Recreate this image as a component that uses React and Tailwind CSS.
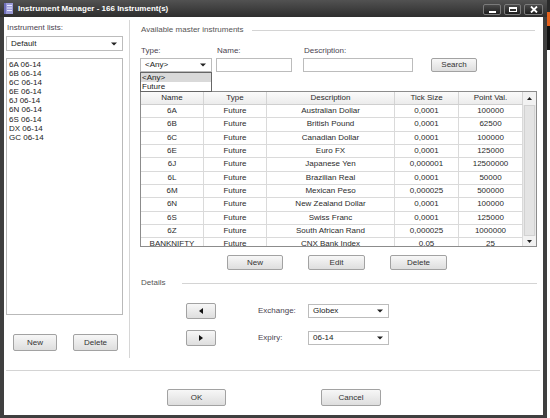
import React from 'react';

const instruments = [
  { name: '6A', type: 'Future', desc: 'Australian Dollar', tick: '0,0001', point: '100000' },
  { name: '6B', type: 'Future', desc: 'British Pound', tick: '0,0001', point: '62500' },
  { name: '6C', type: 'Future', desc: 'Canadian Dollar', tick: '0,0001', point: '100000' },
  { name: '6E', type: 'Future', desc: 'Euro FX', tick: '0,0001', point: '125000' },
  { name: '6J', type: 'Future', desc: 'Japanese Yen', tick: '0,000001', point: '12500000' },
  { name: '6L', type: 'Future', desc: 'Brazilian Real', tick: '0,0001', point: '50000' },
  { name: '6M', type: 'Future', desc: 'Mexican Peso', tick: '0,000025', point: '500000' },
  { name: '6N', type: 'Future', desc: 'New Zealand Dollar', tick: '0,0001', point: '100000' },
  { name: '6S', type: 'Future', desc: 'Swiss Franc', tick: '0,0001', point: '125000' },
  { name: '6Z', type: 'Future', desc: 'South African Rand', tick: '0,000025', point: '1000000' },
  { name: 'BANKNIFTY', type: 'Future', desc: 'CNX Bank Index', tick: '0,05', point: '25' },
];

const lists = ['6A 06-14', '6B 06-14', '6C 06-14', '6E 06-14', '6J 06-14', '6N 06-14', '6S 06-14', 'DX 06-14', 'GC 06-14'];

const columns = [
  { key: 'name', label: 'Name', w: 'w-[63px]' },
  { key: 'type', label: 'Type', w: 'w-[63px]' },
  { key: 'desc', label: 'Description', w: 'w-[128px]' },
  { key: 'tick', label: 'Tick Size', w: 'w-[64px]' },
  { key: 'point', label: 'Point Val.', w: 'w-[64px]' },
];

const Caret = () => (
  <svg width="6" height="4" viewBox="0 0 6 4">
    <path d="M0 0.5h6L3 3.5z" fill="#222" />
  </svg>
);

const Combo = ({ value, className }) => (
  <div className={`flex items-center justify-between border border-[#bcbcbc] bg-white pl-[4px] pr-[5px] text-[#222] ${className}`}>
    <span>{value}</span>
    <Caret />
  </div>
);

const Btn = ({ children, className }) => (
  <button className={`flex items-center justify-center rounded-[2px] border border-[#a2a2a2] bg-linear-to-b from-[#f7f7f7] to-[#dedede] text-[#333] ${className}`}>
    {children}
  </button>
);

const WinBtn = ({ children, className }) => (
  <div className={`flex h-[11px] items-center justify-center rounded-[2px] border border-[#7a7a7a] bg-linear-to-b from-[#4a4a4a] to-[#1e1e1e] ${className}`}>
    {children}
  </div>
);

const App = () => {
  return (
    <div className="flex h-[418px] w-[550px] overflow-hidden bg-white font-['Liberation_Sans',Arial,sans-serif]">
      {/* window */}
      <div className="flex h-full w-[547px] flex-col bg-[#3f3f3f]">
        {/* title bar */}
        <div className="flex h-[17px] items-start bg-linear-to-b from-[#525252] to-[#2e2e2e]">
          <svg className="ml-[4px] mt-[3px]" width="9" height="11" viewBox="0 0 9 11">
            <rect x="0" y="0" width="9" height="11" fill="#9c9cd8" />
            <rect x="0" y="0" width="2" height="11" fill="#6f6fb8" />
            <path d="M3 2.5h5M3 5h5M3 7.5h5" stroke="#e8e8ff" strokeWidth="1" />
          </svg>
          <span className="ml-[5px] mt-[3px] text-[8px] font-bold leading-[11px] text-white">Instrument Manager - 166 Instrument(s)</span>
          <div className="ml-auto mr-[4px] mt-[4px] flex gap-[3px]">
            <WinBtn className="w-[18px]">
              <div className="mt-[4px] h-[2px] w-[7px] bg-white" />
            </WinBtn>
            <WinBtn className="w-[17px]">
              <div className="h-[5px] w-[8px] border border-t-2 border-white" />
            </WinBtn>
            <WinBtn className="w-[19px]">
              <svg width="8" height="7" viewBox="0 0 8 7">
                <path d="M1 0.5l6 6M7 0.5l-6 6" stroke="#fff" strokeWidth="1.8" />
              </svg>
            </WinBtn>
          </div>
        </div>

        {/* client area */}
        <div className="mx-[4px] mb-[3px] flex flex-1 flex-col bg-white text-[8px] leading-[10px] text-[#3a3a3a]">
          <div className="flex h-[353px]">
            {/* left panel */}
            <div className="flex w-[125px] flex-col pl-[2px]">
              <div className="ml-[1px] mt-[6px] h-[10px] text-[#4a4450]">Instrument lists:</div>
              <Combo value="Default" className="mt-[3px] h-[15px] w-[117px]" />
              <div className="mt-[7px] h-[257px] w-[117px] border border-[#b9b9b9] pl-[2px] pt-[1px] leading-[9.1px] text-[#222]">
                {lists.map((item) => (
                  <div key={item}>{item}</div>
                ))}
              </div>
              <div className="mt-[19px] flex">
                <Btn className="ml-[7px] h-[17px] w-[44px]">New</Btn>
                <Btn className="ml-[16px] h-[17px] w-[45px]">Delete</Btn>
              </div>
            </div>

            <div className="mt-[3px] h-[338px] w-[1px] bg-[#d6d6d6]" />

            {/* right panel */}
            <div className="flex flex-1 flex-col pl-[10px] pr-[6px]">
              <div className="mt-[8px] flex h-[10px] items-center">
                <span className="ml-[1px] text-[#555]">Available master instruments</span>
                <div className="ml-[8px] mr-[2px] h-px flex-1 bg-[#d4d4d4]" />
              </div>

              <div className="mt-[11px] flex h-[10px] text-[#4a4450]">
                <span className="ml-[1px] w-[76px]">Type:</span>
                <span className="w-[87px]">Name:</span>
                <span>Description:</span>
              </div>

              <div className="relative mt-[2px] flex h-[14px]">
                <div className="relative">
                  <Combo value={'<Any>'} className="h-[14px] w-[72px]" />
                  <div className="absolute left-0 top-full z-10 w-[72px] border border-[#666] bg-white text-[#222]">
                    <div className="h-[9px] bg-[#d9d9d9] pl-[1px] leading-[9px]">{'<Any>'}</div>
                    <div className="h-[9px] pl-[1px] leading-[9px]">Future</div>
                  </div>
                </div>
                <div className="ml-[4px] h-[14px] w-[76px] border border-[#bcbcbc]" />
                <div className="ml-[11px] h-[14px] w-[110px] border border-[#bcbcbc]" />
                <Btn className="ml-[18px] h-[14px] w-[46px]">Search</Btn>
              </div>

              {/* table */}
              <div className="mt-[19px] flex h-[156px] overflow-hidden border border-[#8c8c8c] text-[#2b2b2b]">
                <div className="flex w-[382px] flex-col">
                  <div className="flex h-[13px] shrink-0 border-b border-[#cfcfcf] bg-linear-to-b from-[#fbfbfb] to-[#ececec]">
                    {columns.map((c) => (
                      <div key={c.key} className={`${c.w} flex items-center justify-center border-r border-[#d4d4d4]`}>
                        {c.label}
                      </div>
                    ))}
                  </div>
                  {instruments.map((r) => (
                    <div key={r.name} className="flex h-[13.33px] shrink-0 border-b border-[#dadada]">
                      {columns.map((c) => (
                        <div key={c.key} className={`${c.w} flex items-center justify-center border-r border-[#dadada] whitespace-nowrap`}>
                          {r[c.key]}
                        </div>
                      ))}
                    </div>
                  ))}
                </div>
                {/* scrollbar */}
                <div className="flex w-[13px] flex-col bg-[#e9e9e9]">
                  <div className="flex h-[13px] items-center justify-center bg-[#f2f2f2]">
                    <svg width="5" height="3" viewBox="0 0 5 3"><path d="M0 3h5L2.5 0z" fill="#222" /></svg>
                  </div>
                  <div className="mx-[1px] flex-1 border border-[#d2d2d2] bg-[#e4e4e4]" />
                  <div className="flex h-[10px] items-center justify-center bg-[#f2f2f2]">
                    <svg width="5" height="3" viewBox="0 0 5 3"><path d="M0 0h5L2.5 3z" fill="#222" /></svg>
                  </div>
                </div>
              </div>

              <div className="mt-[8px] flex h-[15px]">
                <Btn className="ml-[87px] h-[15px] w-[56px]">New</Btn>
                <Btn className="ml-[25px] h-[15px] w-[57px]">Edit</Btn>
                <Btn className="ml-[25px] h-[15px] w-[57px]">Delete</Btn>
              </div>

              <div className="mt-[8px] flex h-[10px] items-center">
                <span className="ml-[1px] text-[#555]">Details</span>
                <div className="ml-[17px] h-px flex-1 bg-[#d4d4d4]" />
              </div>

              <div className="mt-[15px] flex h-[16px] items-center">
                <Btn className="ml-[46px] h-[16px] w-[30px]">
                  <svg width="4" height="6" viewBox="0 0 4 6"><path d="M4 0v6L0 3z" fill="#111" /></svg>
                </Btn>
                <span className="ml-[42px] w-[50px] text-[#4a4450]">Exchange:</span>
                <Combo value="Globex" className="h-[14px] w-[81px]" />
              </div>

              <div className="mt-[11px] flex h-[16px] items-center">
                <Btn className="ml-[46px] h-[16px] w-[30px]">
                  <svg width="4" height="6" viewBox="0 0 4 6"><path d="M0 0v6L4 3z" fill="#111" /></svg>
                </Btn>
                <span className="ml-[42px] w-[50px] text-[#4a4450]">Expiry:</span>
                <Combo value="06-14" className="h-[14px] w-[81px]" />
              </div>
            </div>
          </div>

          <div className="ml-[2px] mr-[3px] h-px bg-[#d4d4d4]" />

          <div className="mt-[18px] flex">
            <Btn className="ml-[163px] h-[17px] w-[59px]">OK</Btn>
            <Btn className="ml-[95px] h-[17px] w-[60px]">Cancel</Btn>
          </div>
        </div>
      </div>

      {/* sliver of the application behind */}
      <div className="flex w-[3px] flex-col">
        <div className="h-[12px] bg-[#2a2a2a]" />
        <div className="h-[14px] bg-[#e2601c]" />
        <div className="h-[24px] bg-[#111]" />
        <div className="flex-1 bg-white" />
      </div>
    </div>
  );
};

export default App;
